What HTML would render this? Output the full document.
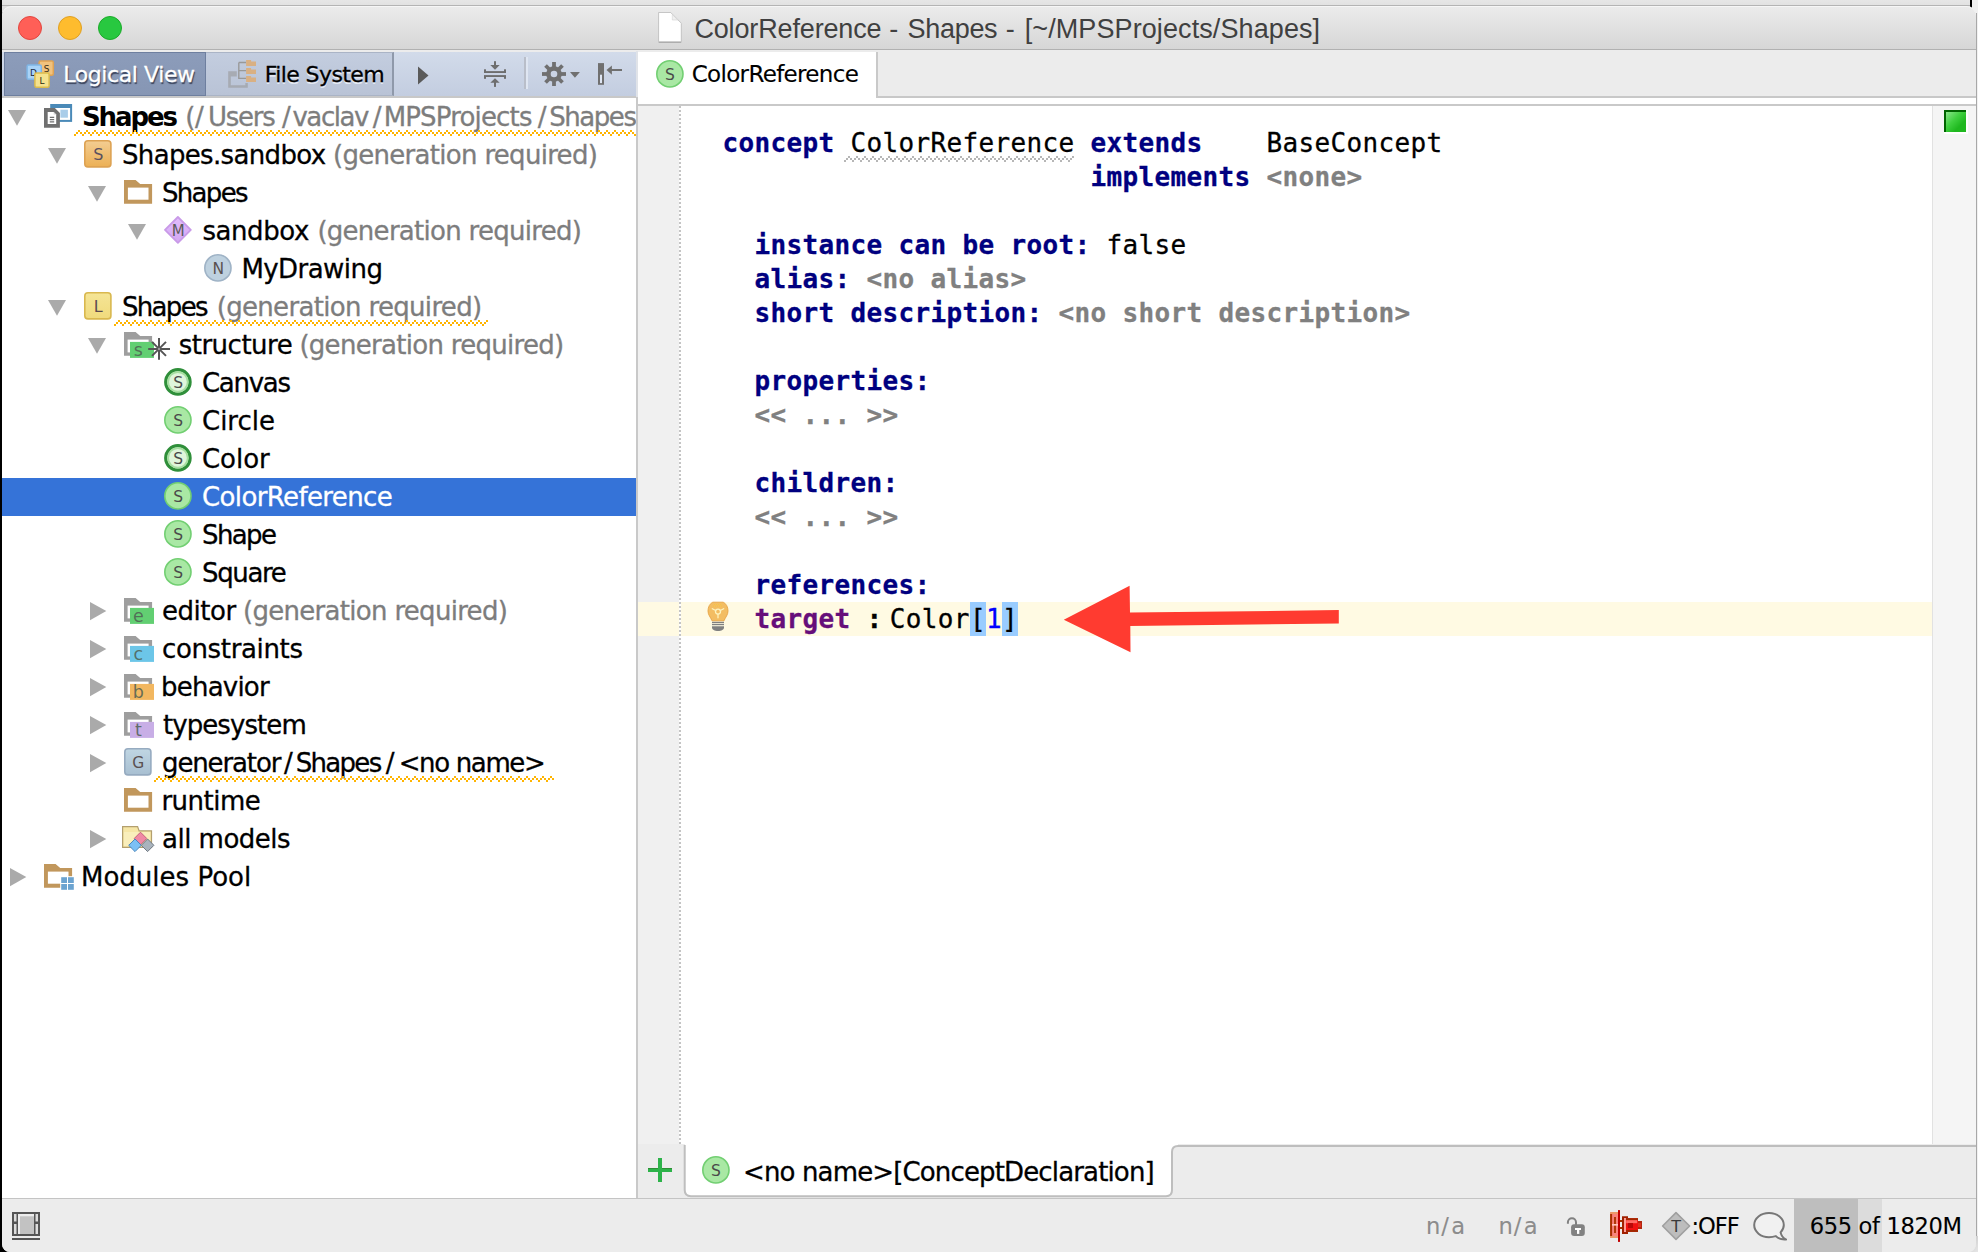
<!DOCTYPE html><html><head><meta charset="utf-8"><title>ColorReference - Shapes</title><style>
*{box-sizing:border-box}
html,body{margin:0;padding:0}
body{width:1978px;height:1252px;overflow:hidden;background:#000;position:relative;font-family:"DejaVu Sans","Liberation Sans",sans-serif;color:#000}
.abs{position:absolute}
#behind{left:2px;top:0;width:1976px;height:12px;background:linear-gradient(#e6e6e6,#dcdcdc)}
#behindline{left:2px;top:5px;width:1968px;height:1px;background:#b4b4b4}
#rightstrip{left:1972px;top:0;width:6px;height:1252px;background:#f1f1f1}
#win{left:2px;top:6px;width:1974.200px;height:1246px;background:#ececec;border-radius:9px 9px 8px 8px;overflow:hidden}
#titlebar{left:0;top:0;width:1974px;height:44px;background:linear-gradient(#ececec,#d6d6d6);border-bottom:1px solid #b1b1b1;border-radius:9px 9px 0 0;box-shadow:inset 0 1px 0 #f6f6f6}
.tl{top:10px;width:24px;height:24px;border-radius:50%}
.title{top:.9px;height:44px;line-height:45px;font-family:"Liberation Sans",sans-serif;font-size:27px;color:#404040;white-space:pre}
/* left panel */
#lhead{left:0;top:46px;width:634px;height:45px;background:linear-gradient(#d2dbea,#c3cde0);border-bottom:1px solid #c6c6c6}
#tree{left:0;top:91px;width:634px;height:1101px;background:#fff;overflow:hidden}
.row{position:absolute;left:0;width:634px;height:38px;line-height:38px;font-size:26px;letter-spacing:-.62px;white-space:pre}
.row .t{position:absolute;top:0;-webkit-text-stroke:.3px}
.g{color:#7d7d7d}
.row b{letter-spacing:-1.8px}
.sl{margin:0 2.2px}
.sel{background:#3573d8;color:#fff}
.arr{position:absolute}
.ic{position:absolute}
/* editor */
#split{left:634px;top:91px;width:2px;height:1101px;background:#c9c9c9}
#split2{left:634px;top:45px;width:1.600px;height:46px;background:#e0e3e8}
#etabs{left:636px;top:45px;width:1338px;height:47px;background:#ececec;border-bottom:2px solid #c8c8c8}
#etab{left:636px;top:45.600px;width:240px;height:46.400px;background:#fff;border-right:2px solid #c9c9c9}
#etabw{left:636px;top:90px;width:238px;height:9px;background:#fff}
#etabtxt{-webkit-text-stroke:.12px;top:45px;height:46px;line-height:47px;font-size:23px;white-space:pre}
#ewhite{left:636px;top:92px;width:1338px;height:7px;background:#fff}
#eline{left:636px;top:98px;width:1338px;height:2px;background:#c9c9c9}
#editor{left:636px;top:100px;width:1338px;height:1038px;background:#fff;overflow:hidden}
#gutter{left:0;top:0;width:42px;height:1040px;background:#f0f0f0}
#dots{left:41.300px;top:0;width:1.800px;height:1040px;background:repeating-linear-gradient(#c4c4c4 0 2px,#fff 2px 4px)}
#stripe{left:1294.200px;top:0;width:44px;height:1040px;background:#f5f5f5;border-left:1px solid #e2e2e2}
#band{left:0;top:496px;width:1294px;height:34px;background:#fffae3}
.ln{position:absolute;left:0;height:34px;line-height:34px;font-family:"DejaVu Sans Mono","Liberation Mono",monospace;font-size:26px;white-space:pre}
.ln span{position:absolute;top:0;display:block;letter-spacing:.348px;-webkit-text-stroke:.3px}
.k{font-weight:bold;color:#000080;}
.p{font-weight:bold;color:#808080}
.hl{background:#99ccff}
/* bottom */
#btabs{left:636px;top:1138px;width:1338px;height:54px;background:#ececec}
#btabtxt{-webkit-text-stroke:.3px;top:1141px;height:50px;line-height:50px;font-size:26px;white-space:pre}
#status{left:0;top:1192px;width:1974px;height:54px;background:#ececec;border-top:1px solid #c4c4c4}
.st{-webkit-text-stroke:.1px;position:absolute;top:1194px;height:53px;line-height:53px;font-size:22.6px;white-space:pre}
</style></head><body>
<div id="behind" class="abs"></div><div id="behindline" class="abs"></div><div id="rightstrip" class="abs"></div>
<div class="abs" style="left:1969.800px;top:0;width:2.300px;height:7.500px;background:#000"></div><div class="abs" style="left:1976.100px;top:13px;width:1.400px;height:1230px;background:#a8a8a8"></div>
<div class="abs" style="left:1960px;top:1236px;width:18px;height:16px;background:linear-gradient(135deg,#bdbdbd,#e6e6e6)"></div>
<div id="win" class="abs">
<div id="titlebar" class="abs"></div>
<div class="abs tl" style="left:16px;background:#ff5f57;border:1px solid #e2463f"></div>
<div class="abs tl" style="left:56px;background:#febc2e;border:1px solid #dfa023"></div>
<div class="abs tl" style="left:96px;background:#28c840;border:1px solid #1aab29"></div>
<svg class="abs" style="left:656px;top:6px" width="25" height="32" viewBox="0 0 25 32"><path d="M0.700 30.300H23.200" stroke="#9a9a9a" stroke-width="1.100" opacity="0.800"/><path d="M0.600 0.500H12.700L23.300 11.200V29.700H0.600z" fill="#fff" stroke="#b2b2b2" stroke-width="0.700"/><path d="M14.300 2.600V8H19.800z" fill="#f1f1f1" stroke="#d2d2d2" stroke-width="0.600"/></svg>
<div class="abs title" style="left:692.4px;letter-spacing:-0.144px">ColorReference</div><div class="abs title" style="left:887.3px;letter-spacing:0px">-</div><div class="abs title" style="left:905.5px;letter-spacing:-0.295px">Shapes</div><div class="abs title" style="left:1003.8px;letter-spacing:0px">-</div><div class="abs title" style="left:1022.7px;letter-spacing:0.096px">[~/MPSProjects/Shapes]</div>
<div id="lhead" class="abs"></div>
<div class="abs" style="left:2px;top:46px;width:202px;height:44px;background:linear-gradient(#8c9cba,#8696b4);border:1px solid #6e7f9f"></div>
<div class="abs" style="left:204px;top:46px;width:188px;height:44px;background:linear-gradient(#c3cddf,#b9c3d6);border:1px solid #aab4c6;border-left:none;border-right:2px solid #8f99aa"></div>
<div class="abs" style="left:61.3px;letter-spacing:-0.419px;top:47px;height:44px;line-height:44px;font-size:22px;color:#fff;-webkit-text-stroke:.3px;text-shadow:1px 1.500px 1px #39425a;white-space:pre">Logical View</div>
<div class="abs" style="left:262.7px;letter-spacing:-0.581px;top:47px;height:44px;line-height:44px;font-size:22px;color:#000;-webkit-text-stroke:.3px;text-shadow:0 1.500px 0 #e4eaf4;white-space:pre">File System</div>
<svg class="abs" style="left:24px;top:54px" width="29" height="29" viewBox="0 0 29 29" ><rect x="13.100" y="1" width="14.200" height="14.200" rx="1.500" fill="#f0c27e" stroke="#e0a352" stroke-width="1.500"/><text x="20.500" y="12" text-anchor="middle" font-family="DejaVu Sans,sans-serif" font-size="9" fill="#3a2a10">S</text><rect x="1.100" y="5" width="14.200" height="14.200" rx="1.500" fill="#a9d3f7" stroke="#7fb6e6" stroke-width="1.500"/><text x="7.500" y="15.800" text-anchor="middle" font-family="DejaVu Sans,sans-serif" font-size="9" fill="#1a2a40">D</text><rect x="8.900" y="13" width="14.200" height="14.200" rx="1.500" fill="#f5e28f" stroke="#dcbc4c" stroke-width="1.500"/><text x="16" y="24" text-anchor="middle" font-family="DejaVu Sans,sans-serif" font-size="9" fill="#2a2a10">L</text></svg>
<svg class="abs" style="left:226px;top:54px" width="28" height="28" viewBox="0 0 28 28" ><path d="M0.200 11.200h8.600v5.400h-6v8.600h14.500v-2.200h2.500v4.800H0.200z" fill="#a4a7ae" opacity="0.900"/><path d="M10.800 2.500v16.500M10.800 2.500h7.300M10.800 10.600h7.300M10.800 18.400h7.300" stroke="#999" stroke-width="1.400" fill="none"/><path d="M18.100 0h5v1.500h4.900V6H18.100zM18.100 8h5v1.500h4.900V14H18.100zM18.100 16h5v1.500h4.900V22H18.100z" fill="#d9b083"/></svg>
<svg class="abs" style="left:416px;top:60px" width="12" height="20" viewBox="0 0 12 20" ><path d="M0 0.500v18L10.500 9.500z" fill="#5a5a5a"/></svg>
<svg class="abs" style="left:482px;top:55px" width="22" height="26" viewBox="0 0 22 26" ><g fill="#6e6e6e"><rect x="10" y="0.200" width="2" height="5"/><path d="M6.300 4h9.400L11 8.700z"/><rect x="0" y="10.100" width="22" height="1.900"/><rect x="0" y="8.300" width="2" height="3"/><rect x="20" y="8.300" width="2" height="3"/><rect x="0" y="14.100" width="22" height="1.900"/><rect x="0" y="15" width="2" height="2.800"/><rect x="20" y="15" width="2" height="2.800"/><path d="M6.300 21.800h9.400L11 17.300z"/><rect x="10" y="21" width="2" height="4.900"/></g></svg>
<div class="abs" style="left:522px;top:51px;width:2px;height:32px;background:#b9bec9"></div><div class="abs" style="left:524px;top:51px;width:2px;height:32px;background:#dfe6f2"></div>
<svg class="abs" style="left:540px;top:56px" width="24" height="24" viewBox="0 0 24 24" ><g transform="translate(12,12)" fill="#707070"><rect x="-1.900" y="-12" width="3.800" height="6" transform="rotate(0)"/><rect x="-1.900" y="-12" width="3.800" height="6" transform="rotate(45)"/><rect x="-1.900" y="-12" width="3.800" height="6" transform="rotate(90)"/><rect x="-1.900" y="-12" width="3.800" height="6" transform="rotate(135)"/><rect x="-1.900" y="-12" width="3.800" height="6" transform="rotate(180)"/><rect x="-1.900" y="-12" width="3.800" height="6" transform="rotate(225)"/><rect x="-1.900" y="-12" width="3.800" height="6" transform="rotate(270)"/><rect x="-1.900" y="-12" width="3.800" height="6" transform="rotate(315)"/><circle r="7.800"/></g><circle cx="12" cy="12" r="3.300" fill="#cbd4e5"/></svg>
<svg class="abs" style="left:568px;top:66px" width="10" height="6" viewBox="0 0 10 6" ><path d="M0 0h9.900L4.950 5.800z" fill="#707070"/></svg>
<svg class="abs" style="left:596px;top:57px" width="25" height="22" viewBox="0 0 25 22" ><rect x="0" y="0.100" width="6" height="21.700" fill="#707070"/><rect x="2" y="11.700" width="2" height="8.400" fill="#dfe6f3"/><path d="M12 7h12" stroke="#707070" stroke-width="2"/><path d="M8.500 7L13.900 2.400v9.300z" fill="#707070"/></svg>
<div id="tree" class="abs">
<div class="row" style="top:1px">
<svg class="abs" style="left:6px;top:12px" width="18" height="16" viewBox="0 0 18 16" ><path d="M0 0h18L9 15.700z" fill="#aaa"/></svg>
<svg class="abs" style="left:42px;top:6px" width="29" height="24" viewBox="0 0 29 24" ><rect x="6.200" y="0" width="21.900" height="17.900" fill="#4a8ab8"/><rect x="8.200" y="4" width="17.900" height="11.900" fill="#fff"/><rect x="16.400" y="5.700" width="7.500" height="8" fill="#a9cde9"/><path d="M0 4.100h10.900l5 5V23.800H0z" fill="#707070"/><path d="M3.700 8h6l2.500 2.500v9.600H3.700z" fill="#fff"/><path d="M9.700 8v2.500h2.500z" fill="#d8d8d8"/><path d="M5.800 13.400h4.400M5.800 15.700h4.400M5.800 17.900h4.400" stroke="#707070" stroke-width="1.200"/></svg>
<span class="t" style="left:80px;letter-spacing:-2.125px;font-weight:bold;-webkit-text-stroke:0">Shapes</span>
<span class="t g" style="left:183.3px;letter-spacing:-0.444px">(/</span>
<span class="t g" style="left:205.9px;letter-spacing:-1.24px">Users</span>
<span class="t g" style="left:279.9px;letter-spacing:0px">/</span>
<span class="t g" style="left:290.4px;letter-spacing:-1.414px">vaclav</span>
<span class="t g" style="left:370.7px;letter-spacing:0px">/</span>
<span class="t g" style="left:381.7px;letter-spacing:-0.837px">MPSProjects</span>
<span class="t g" style="left:535.8px;letter-spacing:0px">/</span>
<span class="t g" style="left:547.2px;letter-spacing:-1.443px">Shapes)</span>
</div>
<div class="row" style="top:39px">
<svg class="abs" style="left:46px;top:12px" width="18" height="16" viewBox="0 0 18 16" ><path d="M0 0h18L9 15.700z" fill="#aaa"/></svg>
<svg class="abs" style="left:82.2px;top:4px" width="28" height="28" viewBox="0 0 28 28" ><defs><linearGradient id="gS824" x1="0" y1="0" x2="0" y2="1"><stop offset="0" stop-color="#f3cd92"/><stop offset="1" stop-color="#ecb055"/></linearGradient></defs><rect x="0.800" y="0.800" width="26.100" height="26.100" rx="3.200" fill="url(#gS824)" stroke="#dda253" stroke-width="1.600"/><text x="13.900" y="19.800" text-anchor="middle" font-family="DejaVu Sans,sans-serif" font-size="16" fill="#5a5060">S</text></svg>
<span class="t" style="left:120px;letter-spacing:-0.661px">Shapes.sandbox</span>
<span class="t g" style="left:331px;letter-spacing:-0.702px">(generation required)</span>
</div>
<div class="row" style="top:77px">
<svg class="abs" style="left:86px;top:12px" width="18" height="16" viewBox="0 0 18 16" ><path d="M0 0h18L9 15.700z" fill="#aaa"/></svg>
<svg class="abs" style="left:121.9px;top:6.1px" width="29" height="24" viewBox="0 0 29 24" ><path d="M0 0h11.600l4.600 4h11.900v19.800H0z" fill="#c1975c"/><rect x="3.900" y="7.600" width="20.600" height="12.100" fill="#fff"/></svg>
<span class="t" style="left:160px;letter-spacing:-1.683px">Shapes</span>
</div>
<div class="row" style="top:115px">
<svg class="abs" style="left:126px;top:12px" width="18" height="16" viewBox="0 0 18 16" ><path d="M0 0h18L9 15.700z" fill="#aaa"/></svg>
<svg class="abs" style="left:162.2px;top:4.1px" width="28" height="28" viewBox="0 0 28 28" ><defs><linearGradient id="gm" x1="0" y1="0" x2="0" y2="1"><stop offset="0" stop-color="#e2bdfc"/><stop offset="1" stop-color="#d3a6f3"/></linearGradient></defs><path d="M13.900 1L26.800 13.900L13.900 26.800L1 13.900z" fill="url(#gm)" stroke="#c99ae8" stroke-width="1.800" stroke-linejoin="round"/><text x="13.900" y="19.500" text-anchor="middle" font-family="DejaVu Sans,sans-serif" font-size="15" fill="#5a5a5a">M</text></svg>
<span class="t" style="left:200.4px;letter-spacing:-0.412px">sandbox</span>
<span class="t g" style="left:315.4px;letter-spacing:-0.722px">(generation required)</span>
</div>
<div class="row" style="top:153px">
<svg class="abs" style="left:202.1px;top:4.1px" width="28" height="28" viewBox="0 0 28 28" ><circle cx="13.900" cy="13.900" r="13.1" fill="#bed1df" stroke="#9fb3c6" stroke-width="1.6"/><text x="13.900" y="19.500" text-anchor="middle" font-family="DejaVu Sans,sans-serif" font-size="15.5" fill="#5a5050">N</text></svg>
<span class="t" style="left:239.4px;letter-spacing:-0.554px">MyDrawing</span>
</div>
<div class="row" style="top:191px">
<svg class="abs" style="left:46px;top:12px" width="18" height="16" viewBox="0 0 18 16" ><path d="M0 0h18L9 15.700z" fill="#aaa"/></svg>
<svg class="abs" style="left:82.2px;top:4px" width="28" height="28" viewBox="0 0 28 28" ><defs><linearGradient id="gL824" x1="0" y1="0" x2="0" y2="1"><stop offset="0" stop-color="#f5e596"/><stop offset="1" stop-color="#f0da7c"/></linearGradient></defs><rect x="0.800" y="0.800" width="26.100" height="26.100" rx="3.200" fill="url(#gL824)" stroke="#d9b84f" stroke-width="1.600"/><text x="13.900" y="19.800" text-anchor="middle" font-family="DejaVu Sans,sans-serif" font-size="16" fill="#5b4a50">L</text></svg>
<span class="t" style="left:120px;letter-spacing:-1.683px">Shapes</span>
<span class="t g" style="left:214.7px;letter-spacing:-0.672px">(generation required)</span>
</div>
<div class="row" style="top:229px">
<svg class="abs" style="left:86px;top:12px" width="18" height="16" viewBox="0 0 18 16" ><path d="M0 0h18L9 15.700z" fill="#aaa"/></svg>
<svg class="abs" style="left:122px;top:6.1px" width="48" height="28" viewBox="0 0 48 28" ><path d="M0 0h11.600l4.600 4h11.900v19.800H0z" fill="#9e9e9e"/><rect x="3.600" y="7.600" width="21" height="12.800" fill="#fff"/><rect x="6" y="9.900" width="24" height="16" fill="#62cf72"/><text x="14" y="24.100" text-anchor="middle" font-family="DejaVu Sans,sans-serif" font-size="17.500" fill="#4f5f52" fill-opacity="0.850">s</text><g stroke="#555" stroke-width="2" stroke-linecap="butt"><path d="M35 6v21.800M24.200 16.900h21.800M28 9.900l14 14M42 9.900l-14 14"/></g><circle cx="35" cy="16.900" r="1.200" fill="#999"/></svg>
<span class="t" style="left:176.7px;letter-spacing:-0.499px">structure</span>
<span class="t g" style="left:297.4px;letter-spacing:-0.707px">(generation required)</span>
</div>
<div class="row" style="top:267px">
<svg class="abs" style="left:162.1px;top:4.1px" width="28" height="28" viewBox="0 0 28 28" ><circle cx="13.900" cy="13.900" r="12.200" fill="#dff5db" stroke="#2f8f3a" stroke-width="3.200"/><circle cx="13.900" cy="13.900" r="9.800" fill="none" stroke="#a6dfa0" stroke-width="1.800"/><text x="13.900" y="19.500" text-anchor="middle" font-family="DejaVu Sans,sans-serif" font-size="15.5" fill="#4a4a4a">S</text></svg>
<span class="t" style="left:200px;letter-spacing:-1.297px">Canvas</span>
</div>
<div class="row" style="top:305px">
<svg class="abs" style="left:162.1px;top:4.1px" width="28" height="28" viewBox="0 0 28 28" ><circle cx="13.900" cy="13.900" r="13.1" fill="#a9e8a4" stroke="#72cf72" stroke-width="1.6"/><text x="13.900" y="19.500" text-anchor="middle" font-family="DejaVu Sans,sans-serif" font-size="15.5" fill="#4a4a4a">S</text></svg>
<span class="t" style="left:200px;letter-spacing:-0.003px">Circle</span>
</div>
<div class="row" style="top:343px">
<svg class="abs" style="left:162.1px;top:4.1px" width="28" height="28" viewBox="0 0 28 28" ><circle cx="13.900" cy="13.900" r="12.200" fill="#dff5db" stroke="#2f8f3a" stroke-width="3.200"/><circle cx="13.900" cy="13.900" r="9.800" fill="none" stroke="#a6dfa0" stroke-width="1.800"/><text x="13.900" y="19.500" text-anchor="middle" font-family="DejaVu Sans,sans-serif" font-size="15.5" fill="#4a4a4a">S</text></svg>
<span class="t" style="left:200px;letter-spacing:-0.048px">Color</span>
</div>
<div class="row sel" style="top:381px">
<svg class="abs" style="left:162.1px;top:4.1px" width="28" height="28" viewBox="0 0 28 28" ><circle cx="13.900" cy="13.900" r="13.1" fill="#a9e8a4" stroke="#72cf72" stroke-width="1.6"/><text x="13.900" y="19.500" text-anchor="middle" font-family="DejaVu Sans,sans-serif" font-size="15.5" fill="#4a4a4a">S</text></svg>
<span class="t" style="left:200px;letter-spacing:-0.624px">ColorReference</span>
</div>
<div class="row" style="top:419px">
<svg class="abs" style="left:162.1px;top:4.1px" width="28" height="28" viewBox="0 0 28 28" ><circle cx="13.900" cy="13.900" r="13.1" fill="#a9e8a4" stroke="#72cf72" stroke-width="1.6"/><text x="13.900" y="19.500" text-anchor="middle" font-family="DejaVu Sans,sans-serif" font-size="15.5" fill="#4a4a4a">S</text></svg>
<span class="t" style="left:200px;letter-spacing:-1.605px">Shape</span>
</div>
<div class="row" style="top:457px">
<svg class="abs" style="left:162.1px;top:4.1px" width="28" height="28" viewBox="0 0 28 28" ><circle cx="13.900" cy="13.900" r="13.1" fill="#a9e8a4" stroke="#72cf72" stroke-width="1.6"/><text x="13.900" y="19.500" text-anchor="middle" font-family="DejaVu Sans,sans-serif" font-size="15.5" fill="#4a4a4a">S</text></svg>
<span class="t" style="left:200px;letter-spacing:-1.367px">Square</span>
</div>
<div class="row" style="top:495px">
<svg class="abs" style="left:87.8px;top:9.9px" width="17" height="19" viewBox="0 0 17 19" ><path d="M0 0v18.200L16.300 9.100z" fill="#aaa"/></svg>
<svg class="abs" style="left:122px;top:6.1px" width="31" height="28" viewBox="0 0 31 28" ><path d="M0 0h11.600l4.600 4h11.900v19.800H0z" fill="#9e9e9e"/><rect x="3.600" y="7.600" width="21" height="12.800" fill="#fff"/><rect x="6" y="9.900" width="24" height="16" fill="#62cf72"/><text x="14" y="24.100" text-anchor="middle" font-family="DejaVu Sans,sans-serif" font-size="17.500" fill="#4f5f52" fill-opacity="0.850">e</text></svg>
<span class="t" style="left:160px;letter-spacing:-0.485px">editor</span>
<span class="t g" style="left:241px;letter-spacing:-0.702px">(generation required)</span>
</div>
<div class="row" style="top:533px">
<svg class="abs" style="left:87.8px;top:9.9px" width="17" height="19" viewBox="0 0 17 19" ><path d="M0 0v18.200L16.300 9.100z" fill="#aaa"/></svg>
<svg class="abs" style="left:122px;top:6.1px" width="31" height="28" viewBox="0 0 31 28" ><path d="M0 0h11.600l4.600 4h11.900v19.800H0z" fill="#9e9e9e"/><rect x="3.600" y="7.600" width="21" height="12.800" fill="#fff"/><rect x="6" y="9.900" width="24" height="16" fill="#6cc6e8"/><text x="14" y="24.100" text-anchor="middle" font-family="DejaVu Sans,sans-serif" font-size="17.500" fill="#4f5f52" fill-opacity="0.850">c</text></svg>
<span class="t" style="left:160px;letter-spacing:-0.354px">constraints</span>
</div>
<div class="row" style="top:571px">
<svg class="abs" style="left:87.8px;top:9.9px" width="17" height="19" viewBox="0 0 17 19" ><path d="M0 0v18.200L16.300 9.100z" fill="#aaa"/></svg>
<svg class="abs" style="left:122px;top:6.1px" width="31" height="28" viewBox="0 0 31 28" ><path d="M0 0h11.600l4.600 4h11.900v19.800H0z" fill="#9e9e9e"/><rect x="3.600" y="7.600" width="21" height="12.800" fill="#fff"/><rect x="6" y="9.900" width="24" height="16" fill="#f2b760"/><text x="14" y="24.100" text-anchor="middle" font-family="DejaVu Sans,sans-serif" font-size="17.500" fill="#4f5f52" fill-opacity="0.850">b</text></svg>
<span class="t" style="left:159px;letter-spacing:-0.776px">behavior</span>
</div>
<div class="row" style="top:609px">
<svg class="abs" style="left:87.8px;top:9.9px" width="17" height="19" viewBox="0 0 17 19" ><path d="M0 0v18.200L16.300 9.100z" fill="#aaa"/></svg>
<svg class="abs" style="left:122px;top:6.1px" width="31" height="28" viewBox="0 0 31 28" ><path d="M0 0h11.600l4.600 4h11.900v19.800H0z" fill="#9e9e9e"/><rect x="3.600" y="7.600" width="21" height="12.800" fill="#fff"/><rect x="6" y="9.900" width="24" height="16" fill="#c8aee6"/><text x="14" y="24.100" text-anchor="middle" font-family="DejaVu Sans,sans-serif" font-size="17.500" fill="#4f5f52" fill-opacity="0.850">t</text></svg>
<span class="t" style="left:161px;letter-spacing:-0.928px">typesystem</span>
</div>
<div class="row" style="top:647px">
<svg class="abs" style="left:87.8px;top:9.9px" width="17" height="19" viewBox="0 0 17 19" ><path d="M0 0v18.200L16.300 9.100z" fill="#aaa"/></svg>
<svg class="abs" style="left:122.2px;top:4.2px" width="28" height="28" viewBox="0 0 28 28" ><defs><linearGradient id="gg" x1="0" y1="0" x2="0" y2="1"><stop offset="0" stop-color="#c0d6e3"/><stop offset="1" stop-color="#a8bfd1"/></linearGradient></defs><rect x="0.800" y="0.800" width="26.100" height="26.100" rx="3.200" fill="url(#gg)" stroke="#96abc0" stroke-width="1.600"/><text x="13.900" y="19.600" text-anchor="middle" font-family="DejaVu Sans,sans-serif" font-size="15.500" fill="#5a5050">G</text></svg>
<span class="t" style="left:160px;letter-spacing:-1.125px">generator</span>
<span class="t" style="left:282px;letter-spacing:0px">/</span>
<span class="t" style="left:293.7px;letter-spacing:-1.683px">Shapes</span>
<span class="t" style="left:383.7px;letter-spacing:0px">/</span>
<span class="t" style="left:396.7px;letter-spacing:-1.359px">&lt;no name&gt;</span>
</div>
<div class="row" style="top:685px">
<svg class="abs" style="left:121.9px;top:6.1px" width="29" height="24" viewBox="0 0 29 24" ><path d="M0 0h11.600l4.600 4h11.900v19.800H0z" fill="#c1975c"/><rect x="3.900" y="7.600" width="20.600" height="12.100" fill="#fff"/></svg>
<span class="t" style="left:159.4px;letter-spacing:-0.515px">runtime</span>
</div>
<div class="row" style="top:723px">
<svg class="abs" style="left:87.8px;top:9.9px" width="17" height="19" viewBox="0 0 17 19" ><path d="M0 0v18.200L16.300 9.100z" fill="#aaa"/></svg>
<svg class="abs" style="left:120px;top:6.3px" width="33" height="27" viewBox="0 0 33 27" ><path d="M0.600 0.600h15l1.500 4.300h12.400v16.500H0.600z" fill="#f6e6a6" stroke="#b39f6e" stroke-width="1.200"/><path d="M2 6h26v14H2z" fill="#f9eebb"/><path d="M18.500 6.200l6.300 6.300l-6.300 6.300l-6.300-6.300z" fill="#f088a4" stroke="#c4607c" stroke-width="1"/><path d="M13 13l6.300 6.300L13 25.600l-6.300-6.300z" fill="#7cc0f5" stroke="#4a88bf" stroke-width="1"/><path d="M25.600 13l6.300 6.300l-6.300 6.300l-6.300-6.300z" fill="#a9b3bd" stroke="#6f7882" stroke-width="1"/></svg>
<span class="t" style="left:160px;letter-spacing:-0.511px">all models</span>
</div>
<div class="row" style="top:761px">
<svg class="abs" style="left:7.8px;top:9.9px" width="17" height="19" viewBox="0 0 17 19" ><path d="M0 0v18.200L16.300 9.100z" fill="#aaa"/></svg>
<svg class="abs" style="left:42px;top:6px" width="30" height="26" viewBox="0 0 30 26" ><path d="M0 0h11.600l4.600 4h11.900v19.800H0z" fill="#c1975c"/><rect x="3.900" y="7.600" width="20.600" height="12.100" fill="#fff"/><rect x="16.200" y="12.200" width="13.800" height="13.800" fill="#fff"/><rect x="17.200" y="13.200" width="5.800" height="5.800" fill="#6ba3d0"/><rect x="24" y="13.200" width="5.800" height="5.800" fill="#6ba3d0"/><rect x="17.200" y="20" width="5.800" height="5.800" fill="#6ba3d0"/><rect x="24" y="20" width="5.800" height="5.800" fill="#6ba3d0"/></svg>
<span class="t" style="left:79px;letter-spacing:0.007px">Modules Pool</span>
</div>
<svg class="abs" style="left:72px;top:33px" width="562" height="6" viewBox="0 0 562 6" ><defs><pattern id="w72_33" width="8" height="6" patternUnits="userSpaceOnUse"><path d="M0 4h2v2h-2zM2 2h2v2h-2zM4 0h2v2h-2zM6 2h2v2h-2z" fill="#ffb400"/></pattern></defs><rect width="562" height="6" fill="url(#w72_33)"/></svg>
<svg class="abs" style="left:112px;top:223px" width="374" height="6" viewBox="0 0 374 6" ><defs><pattern id="w112_223" width="8" height="6" patternUnits="userSpaceOnUse"><path d="M0 4h2v2h-2zM2 2h2v2h-2zM4 0h2v2h-2zM6 2h2v2h-2z" fill="#ffb400"/></pattern></defs><rect width="374" height="6" fill="url(#w112_223)"/></svg>
<svg class="abs" style="left:152px;top:679px" width="400" height="6" viewBox="0 0 400 6" ><defs><pattern id="w152_679" width="8" height="6" patternUnits="userSpaceOnUse"><path d="M0 4h2v2h-2zM2 2h2v2h-2zM4 0h2v2h-2zM6 2h2v2h-2z" fill="#ffb400"/></pattern></defs><rect width="400" height="6" fill="url(#w152_679)"/></svg>
</div>
<div class="abs" style="left:0;top:90px;width:634px;height:2px;background:#c8c8c8"></div>
<div id="split" class="abs"></div><div id="split2" class="abs"></div>
<div id="etabs" class="abs"></div><div id="ewhite" class="abs"></div><div id="etab" class="abs"></div><div id="etabw" class="abs"></div><div id="eline" class="abs"></div>
<svg class="abs" style="left:654px;top:54px" width="28" height="28" viewBox="0 0 28 28" ><circle cx="13.900" cy="13.900" r="13.1" fill="#a9e8a4" stroke="#72cf72" stroke-width="1.6"/><text x="13.900" y="19.500" text-anchor="middle" font-family="DejaVu Sans,sans-serif" font-size="15.5" fill="#4a4a4a">S</text></svg>
<div id="etabtxt" class="abs" style="left:689.7px;letter-spacing:-0.671px">ColorReference</div>
<div id="editor" class="abs"><div id="band" class="abs"></div><div id="gutter" class="abs"></div><div class="abs" style="left:0;top:496px;width:42px;height:34px;background:#fffae3"></div><div id="dots" class="abs"></div><div id="stripe" class="abs"></div>
<div class="ln" style="top:20px"><span class="k" style="left:84.5px">concept</span><span class="" style="left:212.5px">ColorReference</span><span class="k" style="left:452.5px">extends</span><span class="" style="left:628.5px">BaseConcept</span></div>
<div class="ln" style="top:54px"><span class="k" style="left:452.5px">implements</span><span class="p" style="left:628.5px">&lt;none&gt;</span></div>
<div class="ln" style="top:122px"><span class="k" style="left:116.5px">instance can be root:</span><span class="" style="left:468.5px">false</span></div>
<div class="ln" style="top:156px"><span class="k" style="left:116.5px">alias:</span><span class="p" style="left:228.5px">&lt;no alias&gt;</span></div>
<div class="ln" style="top:190px"><span class="k" style="left:116.5px">short description:</span><span class="p" style="left:420.5px">&lt;no short description&gt;</span></div>
<div class="ln" style="top:258px"><span class="k" style="left:116.5px">properties:</span></div>
<div class="ln" style="top:292px"><span class="p" style="left:116.5px">&lt;&lt; ... &gt;&gt;</span></div>
<div class="ln" style="top:360px"><span class="k" style="left:116.5px">children:</span></div>
<div class="ln" style="top:394px"><span class="p" style="left:116.5px">&lt;&lt; ... &gt;&gt;</span></div>
<div class="ln" style="top:462px"><span class="k" style="left:116.5px">references:</span></div>
<div class="ln" style="top:496px"><span style="left:116.5px;font-weight:bold;color:#660e7a">target</span><span style="left:228.5px;font-weight:bold">:</span><span style="left:251.7px">Color</span><span class="hl" style="left:331.9px;width:16px;height:34px"></span><span class="hl" style="left:363.9px;width:16px;height:34px"></span><span style="left:331.9px">[</span><span style="left:347.9px;color:#0000ff">1</span><span style="left:363.9px">]</span></div>
<svg class="abs" style="left:206px;top:50px" width="230" height="6" viewBox="0 0 230 6" ><defs><pattern id="w206_50" width="8" height="6" patternUnits="userSpaceOnUse"><path d="M0 4h2v2h-2zM2 2h2v2h-2zM4 0h2v2h-2zM6 2h2v2h-2z" fill="#b6b6b6"/></pattern></defs><rect width="230" height="6" fill="url(#w206_50)"/></svg>
<svg class="abs" style="left:0;top:0" width="1294" height="700"><polygon points="425.8,513.8 491.6,479.7 492,506.6 700.8,504.1 700.8,517.4 492.3,520 492.5,546.3" fill="#ff3b30"/></svg>
<div class="abs" style="left:1306px;top:4px;width:24px;height:24px;background:#fff"></div>
<div class="abs" style="left:1306px;top:4px;width:22px;height:22px;background:linear-gradient(135deg,#8ae68a 0%,#3fd03f 40%,#1fb81f 70%);border-top:2px solid #006400;border-left:2px solid #006400"></div>
<svg class="abs" style="left:69px;top:495px" width="22" height="31" viewBox="0 0 22 31" ><path d="M5.800 1.200H16.200C19.300 2.600 21 6 21 10C21 14 18.500 16 17 19.800H5C3.500 16 1 14 1 10C1 6 2.700 2.600 5.800 1.200z" fill="#f3bd63" stroke="#e6a445" stroke-width="0.900"/><path d="M7 3.500h8M6 5.200h10" stroke="#f9c93a" stroke-width="1" stroke-dasharray="1 1" opacity="0.800"/><circle cx="11" cy="10.600" r="2.500" fill="none" stroke="#fdf3bf" stroke-width="1.300"/><path d="M5.300 7.700L8.700 9.500M16.700 7.700L13.300 9.500M11 13.100V16.800" stroke="#fdf3bf" stroke-width="1.300" fill="none" stroke-linecap="round"/><rect x="5" y="20.800" width="12" height="1.300" fill="#808080"/><rect x="5" y="22.900" width="12" height="1.300" fill="#808080"/><path d="M5 25.200H17V26.300C17 28.800 14.500 30 11 30C7.500 30 5 28.800 5 26.300z" fill="#808080"/></svg>
</div>
<div id="btabs" class="abs"></div>
<svg class="abs" style="left:636px;top:1134px" width="1338" height="60" viewBox="0 0 1338 60"><path d="M47 0 V50 Q47 56 53 56 H528 Q534 56 534 50 V12 Q534 6 540 6 H540 V0 z" fill="#fff"/><path d="M46.7 5 V50 Q46.7 56.2 53 56.2 H528 Q534 56.2 534 50 V12 Q534 6 540 6 H1338" fill="none" stroke="#bebebe" stroke-width="2"/></svg>
<svg class="abs" style="left:646px;top:1152px" width="24" height="24" viewBox="0 0 24 24" ><path d="M12 0v24" stroke="#2db34a" stroke-width="4"/><path d="M0 12h24" stroke="#2db34a" stroke-width="4"/><path d="M0 10.500h10M14 10.500h10" stroke="#2e8f35" stroke-width="1"/></svg>
<svg class="abs" style="left:700.3px;top:1150.1px" width="28" height="28" viewBox="0 0 28 28" ><circle cx="13.900" cy="13.900" r="13.1" fill="#a9e8a4" stroke="#72cf72" stroke-width="1.6"/><text x="13.900" y="19.500" text-anchor="middle" font-family="DejaVu Sans,sans-serif" font-size="15.5" fill="#4a4a4a">S</text></svg>
<div id="btabtxt" class="abs" style="left:741px;letter-spacing:-0.858px">&lt;no name&gt;[ConceptDeclaration]</div>
<div id="status" class="abs"></div>
<svg class="abs" style="left:10px;top:1206px" width="28" height="29" viewBox="0 0 28 29" ><rect x="0" y="0" width="28" height="24" fill="#555"/><rect x="2" y="2" width="2.500" height="7.500" fill="#dcdcdc"/><rect x="2" y="12" width="2.500" height="10" fill="#dcdcdc"/><rect x="23.500" y="2" width="2.500" height="7.500" fill="#dcdcdc"/><rect x="23.500" y="12" width="2.500" height="10" fill="#dcdcdc"/><rect x="6" y="2" width="16" height="20" fill="#ececec"/><rect x="8" y="4.300" width="14" height="17.700" fill="#c2c2c2"/><rect x="0" y="26" width="28" height="2" fill="#555"/></svg>
<div class="abs" style="left:1792px;top:1193px;width:64px;height:53px;background:#bebebe"></div>
<div class="abs" style="left:1856px;top:1193px;width:24px;height:53px;background:#dcdcdc"></div>
<div class="st" style="left:1807.8px;letter-spacing:-0.379px;color:#000">655 of 1820M</div>
<div class="st" style="left:1424px;letter-spacing:0px;color:#8c8c8c">n</div>
<div class="st" style="left:1439.3px;letter-spacing:0px;color:#8c8c8c">/</div>
<div class="st" style="left:1449.3px;letter-spacing:0px;color:#8c8c8c">a</div>
<div class="st" style="left:1496.4px;letter-spacing:0px;color:#8c8c8c">n</div>
<div class="st" style="left:1511.7px;letter-spacing:0px;color:#8c8c8c">/</div>
<div class="st" style="left:1521.7px;letter-spacing:0px;color:#8c8c8c">a</div>
<div class="st" style="left:1689.6px;letter-spacing:-1.097px;color:#000">:OFF</div>
<svg class="abs" style="left:1564px;top:1211px" width="20" height="20" viewBox="0 0 20 20" ><path d="M1.900 6.800V5.200a4.050 4.050 0 0 1 8.100 0V8" fill="none" stroke="#808080" stroke-width="2"/><rect x="5.100" y="7.200" width="13.700" height="11.700" rx="3" fill="#828282"/><rect x="9" y="11" width="6" height="2" fill="#fff"/><rect x="11" y="12" width="2.300" height="4.900" fill="#fff"/></svg>
<svg class="abs" style="left:1608px;top:1204px" width="33" height="32" viewBox="0 0 33 32" ><rect x="0.100" y="2" width="8" height="26" fill="#f9837c"/><rect x="0.100" y="4" width="2" height="22" fill="#a83000"/><rect x="4" y="7" width="2" height="16" fill="#b03808"/><rect x="0.100" y="2" width="8" height="2" fill="#e8a060" opacity="0.700"/><rect x="0.100" y="26" width="8" height="2" fill="#e8a060" opacity="0.700"/><rect x="2" y="14" width="6" height="1.600" fill="#ffc8c0"/><rect x="8" y="0.100" width="2" height="31.800" fill="#c00000"/><rect x="10" y="10" width="3" height="2" fill="#a83000"/><rect x="10" y="17" width="3" height="2" fill="#a83000"/><path d="M12 6.200h6v2h-4v13.700h4v2h-6z" fill="#a02000"/><rect x="14" y="8.200" width="2.200" height="13.700" fill="#ff9a96"/><rect x="16" y="8.200" width="12" height="13.700" fill="#f01010"/><rect x="16" y="8.200" width="12" height="2" fill="#a02800"/><rect x="16" y="20" width="12" height="1.900" fill="#a02800"/><rect x="16.200" y="10.200" width="11" height="3" fill="#ff6a64"/><rect x="18" y="13" width="5" height="5" fill="#b80808"/><rect x="28" y="11" width="4" height="8" fill="#b02810"/><rect x="28" y="13" width="3" height="4" fill="#e03020"/></svg>
<svg class="abs" style="left:1659px;top:1205px" width="30" height="30" viewBox="0 0 30 30" ><path d="M15 1.600L28.600 15L15 28.400L1.600 15z" fill="#bdbdbd" stroke="#a0a0a0" stroke-width="1.600" stroke-linejoin="round"/><text x="15.100" y="20.600" text-anchor="middle" font-family="DejaVu Sans,sans-serif" font-size="16" fill="#3a3a3a">T</text></svg>
<svg class="abs" style="left:1751px;top:1205px" width="34" height="30" viewBox="0 0 34 30" ><path d="M16 2.100c8.200 0 14.800 5.300 14.800 12c0 2.900-1.200 5.300-3.200 7.300c0.600 2.900 2.300 5.400 5.200 7c-4.700 0.300-7.800-0.900-10-3.300c-2 0.700-4.300 1.100-6.800 1.100c-8.200 0-14.800-5.400-14.800-12.100s6.600-12 14.800-12z" fill="#f1f1f1" stroke="#777" stroke-width="2"/></svg>
</div>
</body></html>
